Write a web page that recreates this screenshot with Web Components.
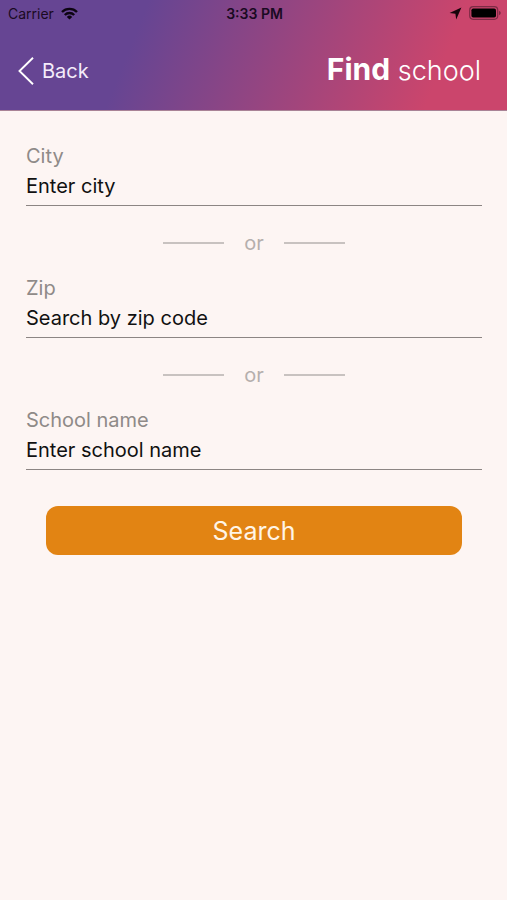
<!DOCTYPE html>
<html lang="en">
<head>
<meta charset="utf-8">
<meta name="viewport" content="width=device-width, initial-scale=1">
<title>Find school</title>
<style>
  body { margin: 0; min-height: 100vh; background: #fdf5f3; font-family: Inter, "Liberation Sans", sans-serif; }
</style>
</head>
<body>
<find-school-page></find-school-page>
<script>
class StatusBar extends HTMLElement {
  constructor() {
    super();
    this.attachShadow({ mode: 'open' }).innerHTML = `
      <style>
        :host { display: grid; grid-template-columns: 1fr auto 1fr; align-items: center; height: 26px; padding: 0 6px 0 8px; color: #1a0a22; font-size: 14px; }
        .left, .right { display: flex; align-items: center; gap: 7px; }
        .right { justify-content: flex-end; }
        .time { font-weight: 600; }
        svg { display: block; }
      </style>
      <div class="left"><span>Carrier</span>
        <svg width="17" height="13" viewBox="0 0 17 13" fill="none" stroke="#0d0412" stroke-width="2.4" aria-hidden="true">
          <path d="M1 5A10.6 10.6 0 0 1 16 5"/><path d="M3.8 8A6.7 6.7 0 0 1 13.2 8"/>
          <path d="M8.5 12.6 5.8 9.9a3.8 3.8 0 0 1 5.4 0z" fill="#0d0412" stroke="none"/>
        </svg>
      </div>
      <span class="time">3:33 PM</span>
      <div class="right">
        <svg width="13" height="13" viewBox="0 0 13 13" aria-hidden="true"><path d="M12.4.6 7.2 12.4 6.4 6.7.6 5.9z" fill="#16040b"/></svg>
        <svg width="32" height="14" viewBox="0 0 32 14" aria-hidden="true">
          <rect x=".7" y=".7" width="28" height="12.6" rx="3.5" fill="none" stroke="#7d2b45" stroke-width="1.2"/>
          <rect x="2.4" y="2.4" width="24.6" height="9.2" rx="1.8" fill="#000"/>
          <path d="M30 4.8q1.8.7 1.8 2.2T30 9.2z" fill="#7d2b45"/>
        </svg>
      </div>`;
  }
}
customElements.define('status-bar', StatusBar);

class NavBar extends HTMLElement {
  constructor() {
    super();
    this.attachShadow({ mode: 'open' }).innerHTML = `
      <style>
        :host { display: flex; align-items: center; justify-content: space-between; box-sizing: border-box; height: 84px; padding: 6px 26px 0 18px; color: #fff; }
        button { display: flex; align-items: center; gap: 7px; border: 0; padding: 0; background: none; color: #f4ecfa; font: 400 20px/28px Inter, sans-serif; cursor: pointer; }
        h1 { margin: 0; padding-bottom: 2px; font-size: 27px; line-height: 36px; font-weight: 300; }
        ::slotted(strong) { font-size: 30px; font-weight: 700; }
        svg { display: block; }
      </style>
      <button type="button">
        <svg width="17" height="28" viewBox="0 0 17 28" fill="none" stroke="#fff" stroke-width="1.9" aria-hidden="true"><path d="M15 .8 1.5 14 15 27.2"/></svg>Back
      </button>
      <h1><slot></slot></h1>`;
  }
}
customElements.define('nav-bar', NavBar);

class TextField extends HTMLElement {
  connectedCallback() {
    this.attachShadow({ mode: 'open' }).innerHTML = `
      <style>
        :host { display: block; font-size: 20px; line-height: 24px; }
        label { display: block; color: #8f8a88; }
        input { display: block; box-sizing: border-box; width: 100%; height: 38px; margin: 0; padding: 0 0 1px; border: 0; border-bottom: 1px solid #8c8583; border-radius: 0; outline: 0; background: none; color: #111; font: inherit; }
        input::placeholder { color: #111; opacity: 1; }
      </style>
      <label for="field"></label>
      <input id="field" type="text">`;
    this.shadowRoot.querySelector('label').textContent = this.getAttribute('label');
    this.shadowRoot.querySelector('input').placeholder = this.getAttribute('hint');
  }
}
customElements.define('text-field', TextField);

class OrDivider extends HTMLElement {
  constructor() {
    super();
    this.attachShadow({ mode: 'open' }).innerHTML = `
      <style>
        :host { display: flex; align-items: center; justify-content: center; gap: 20px; padding: 25px 0 21px; color: #b5afad; font-size: 20px; line-height: 24px; }
        :host::before, :host::after { content: ""; width: 61px; height: 2px; background: #c8c2c0; }
      </style>
      <slot></slot>`;
  }
}
customElements.define('or-divider', OrDivider);

class ActionButton extends HTMLElement {
  constructor() {
    super();
    this.attachShadow({ mode: 'open' }).innerHTML = `
      <style>
        :host { display: block; padding: 0 20px; }
        button { display: block; width: 100%; height: 49px; border: 0; border-radius: 12px; padding: 0; background: #e28413; color: #fff5e6; font: 400 25px/32px Inter, sans-serif; cursor: pointer; }
      </style>
      <button type="button"><slot></slot></button>`;
  }
}
customElements.define('action-button', ActionButton);

class FindSchoolPage extends HTMLElement {
  constructor() {
    super();
    this.attachShadow({ mode: 'open' }).innerHTML = `
      <style>
        :host { display: block; }
        header { background: linear-gradient(112deg, #664593 27%, #cb456c 85%); border-bottom: 1px solid #a98396; }
        main { padding: 33px 25px 24px 26px; }
        action-button { margin-top: 36px; }
      </style>
      <header><status-bar></status-bar><nav-bar><strong>Find</strong> school</nav-bar></header>
      <main>
        <text-field label="City" hint="Enter city"></text-field>
        <or-divider>or</or-divider>
        <text-field label="Zip" hint="Search by zip code"></text-field>
        <or-divider>or</or-divider>
        <text-field label="School name" hint="Enter school name"></text-field>
        <action-button>Search</action-button>
      </main>`;
  }
}
customElements.define('find-school-page', FindSchoolPage);
</script>
</body>
</html>
